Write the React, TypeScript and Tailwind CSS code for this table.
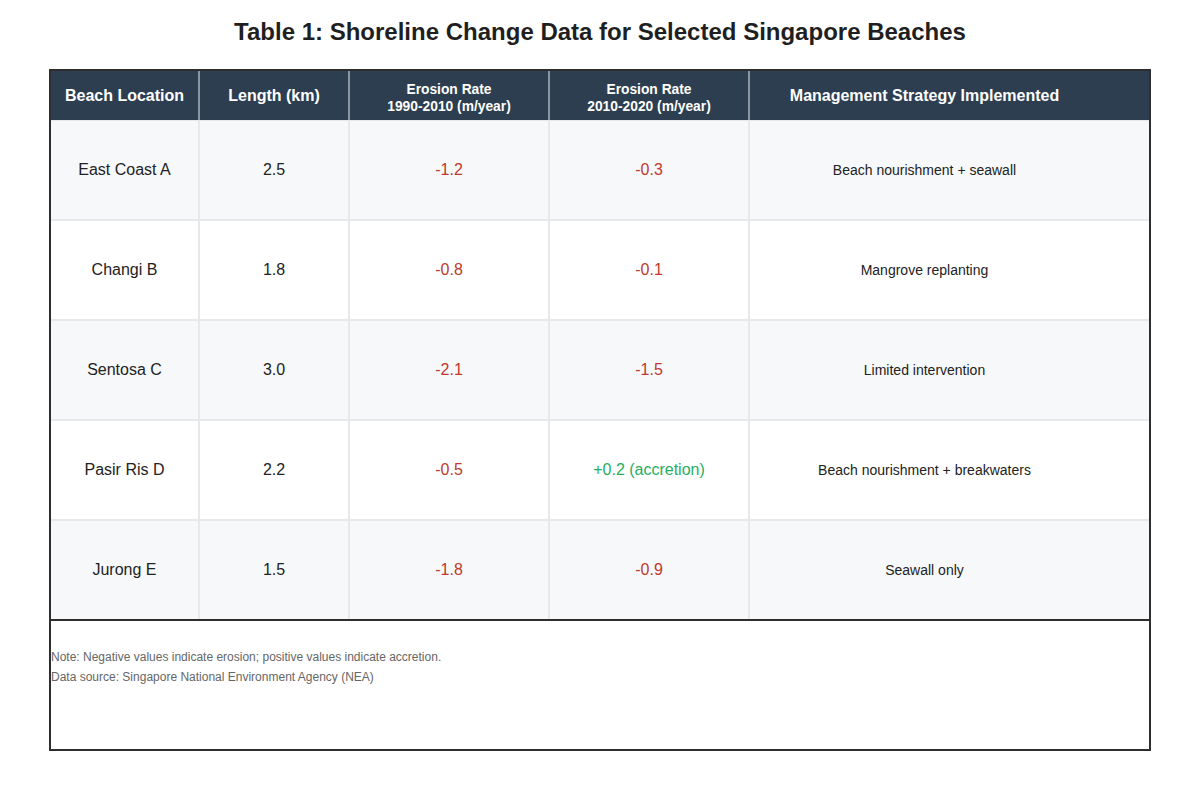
const rows = [
  { loc: 'East Coast A', len: '2.5', r1: '-1.2', r2: '-0.3', pos: false, plan: 'Beach nourishment + seawall' },
  { loc: 'Changi B', len: '1.8', r1: '-0.8', r2: '-0.1', pos: false, plan: 'Mangrove replanting' },
  { loc: 'Sentosa C', len: '3.0', r1: '-2.1', r2: '-1.5', pos: false, plan: 'Limited intervention' },
  { loc: 'Pasir Ris D', len: '2.2', r1: '-0.5', r2: '+0.2 (accretion)', pos: true, plan: 'Beach nourishment + breakwaters' },
  { loc: 'Jurong E', len: '1.5', r1: '-1.8', r2: '-0.9', pos: false, plan: 'Seawall only' },
];

export default function App() {
  return (
    <div className="min-h-[800px] bg-white font-['Liberation_Sans',Arial,sans-serif] text-[#222]">
      <h1 className="pt-[17px] text-center text-[24px] font-bold leading-[30px] text-[#1f1f1f]">
        Table 1: Shoreline Change Data for Selected Singapore Beaches
      </h1>

      <div className="mx-auto mt-[22px] w-[1102px] border-2 border-[#2e2e2e]">
        {/* header */}
        <div className="flex h-[50px] border-b border-[#e6e8ea] bg-[#2c3e50] font-bold text-white">
          <div className="flex w-[149px] items-center justify-center border-r-2 border-[#8a96a3] text-[16px]">Beach Location</div>
          <div className="flex w-[150px] items-center justify-center border-r-2 border-[#8a96a3] text-[16px]">Length (km)</div>
          <div className="flex w-[200px] flex-col items-center justify-center border-r-2 border-[#8a96a3] pt-[4px] text-[13.8px] leading-[17px]">
            <span>Erosion Rate</span>
            <span>1990-2010 (m/year)</span>
          </div>
          <div className="flex w-[200px] flex-col items-center justify-center border-r-2 border-[#8a96a3] pt-[4px] text-[13.8px] leading-[17px]">
            <span>Erosion Rate</span>
            <span>2010-2020 (m/year)</span>
          </div>
          <div className="flex flex-1 items-center justify-center pr-[50px] text-[16px]">Management Strategy Implemented</div>
        </div>

        {/* body */}
        {rows.map((r, i) => (
          <div
            key={r.loc}
            className={`flex text-[16px] ${i < rows.length - 1 ? 'h-[100px] border-b-2 border-[#e6e8ea]' : 'h-[98px]'} ${i % 2 === 0 ? 'bg-[#f7f8fa]' : 'bg-white'}`}
          >
            <div className="flex w-[149px] items-center justify-center border-r-2 border-[#e6e8ea]">{r.loc}</div>
            <div className="flex w-[150px] items-center justify-center border-r-2 border-[#e6e8ea]">{r.len}</div>
            <div className="flex w-[200px] items-center justify-center border-r-2 border-[#e6e8ea] text-[#c0392b]">{r.r1}</div>
            <div className={`flex w-[200px] items-center justify-center border-r-2 border-[#e6e8ea] ${r.pos ? 'text-[#27ae60]' : 'text-[#c0392b]'}`}>
              {r.r2}
            </div>
            <div className="flex flex-1 items-center justify-center pr-[50px] text-[14px]">{r.plan}</div>
          </div>
        ))}

        {/* notes */}
        <div className="h-[130px] border-t-2 border-[#2e2e2e] pt-[26px] text-[12px] leading-[20px] text-[#666]">
          <p>Note: Negative values indicate erosion; positive values indicate accretion.</p>
          <p>Data source: Singapore National Environment Agency (NEA)</p>
        </div>
      </div>
    </div>
  );
}
